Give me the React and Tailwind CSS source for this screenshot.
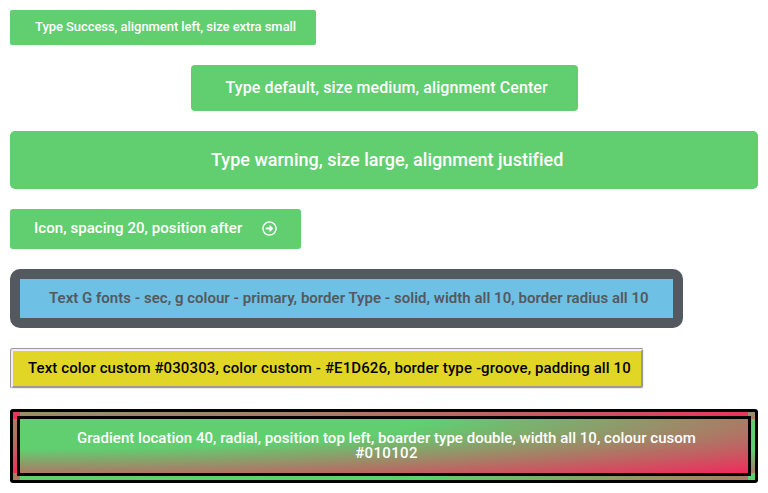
export default function App() {
  const base = "bg-[#61ce70] text-white font-medium leading-none text-left whitespace-nowrap";
  return (
    <main className="min-h-[493px] bg-white p-[10px] flex flex-col items-start gap-5 font-['Roboto',sans-serif]">
      <button className={`${base} rounded-[2px] w-[306px] h-[35px] text-[13px] pl-[25px] pb-[2px] tracking-[-0.06px]`}>Type Success, alignment left, size extra small</button>
      <button className={`${base} rounded-[4px] self-center w-[387px] h-[46px] text-[16px] pl-[35px] tracking-[0.1px]`}>Type default, size medium, alignment Center</button>
      <button className={`${base} rounded-[5px] w-full h-[58px] text-[18px] pl-[201px] tracking-[0.01px]`}>Type warning, size large, alignment justified</button>
      <button className={`${base} rounded-[3px] w-[291px] h-[40px] text-[15px] flex items-center pl-6 pb-[2px] gap-5`}>
        <span className="w-[208px] tracking-[0.065px]">Icon, spacing 20, position after</span>
        <svg className="size-[15px]" viewBox="0 0 512 512" fill="currentColor"><path d="M504 256C504 119 393 8 256 8S8 119 8 256s111 248 248 248 248-111 248-248zm-448 0c0-110.500 89.500-200 200-200s200 89.500 200 200-89.500 200-200 200S56 366.500 56 256zm72 20v-40c0-6.600 5.400-12 12-12h116v-67c0-10.700 12.900-16 20.500-8.500l99 99c4.700 4.700 4.700 12.300 0 17l-99 99c-7.600 7.600-20.500 2.200-20.500-8.500v-67H140c-6.600 0-12-5.400-12-12z" /></svg>
      </button>
      <button className="bg-[#6ec1e4] text-[#54595f] font-semibold leading-none text-[15px] text-left whitespace-nowrap border-[10px] border-solid border-[#54595f] rounded-[10px] w-[673px] h-[59px] pl-[29px] tracking-[0.012px]">Text G fonts - sec, g colour - primary, border Type - solid, width all 10, border radius all 10</button>
      <button className="bg-[#e1d626] text-[#030303] font-medium leading-none text-[15px] text-left whitespace-nowrap border-[3px] [border-style:groove] rounded-[3px] w-[634px] h-[41px] pl-[15px] pb-px tracking-[0.11px]">Text color custom #030303, color custom - #E1D626, border type -groove, padding all 10</button>
      <button className="bg-[radial-gradient(at_top_left,#61ce70_40%,#f2295b_100%)] text-white font-medium leading-none text-[15px] border-[10px] [border-style:double] border-[#010102] rounded-[3px] w-full h-[74px] pl-[29px] pr-6 tracking-[0.03px]">Gradient location 40, radial, position top left, boarder type double, width all 10, colour cusom<br /><span className="tracking-[0.35px]">#010102</span></button>
    </main>
  );
}
